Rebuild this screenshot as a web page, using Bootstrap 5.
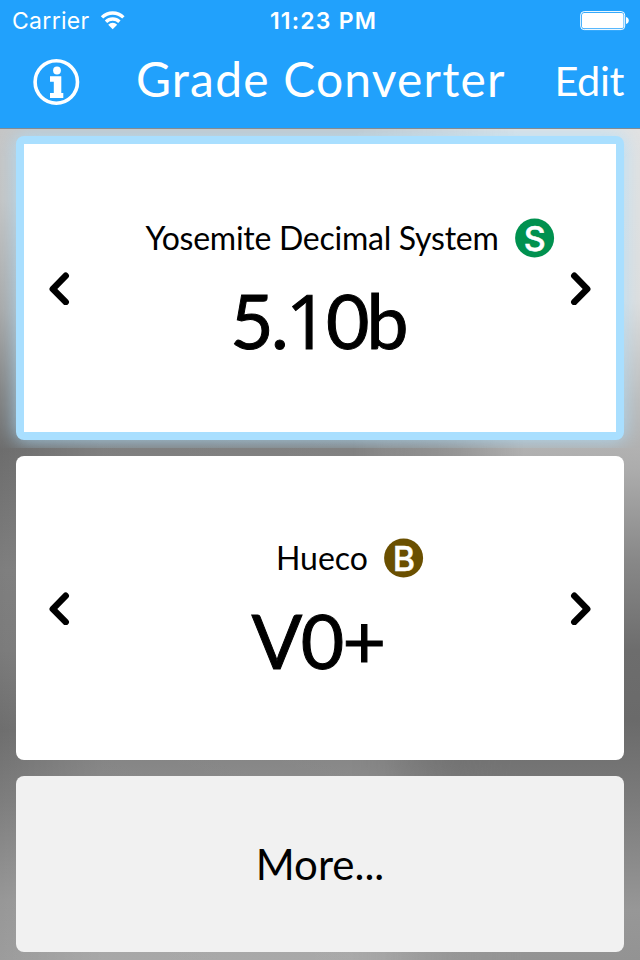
<!DOCTYPE html>
<html lang="en">
<head>
<meta charset="utf-8">
<meta name="viewport" content="width=device-width, initial-scale=1">
<title>Grade Converter</title>
<link href="https://cdn.jsdelivr.net/npm/bootstrap@5.3.0/dist/css/bootstrap.min.css" rel="stylesheet">
<style>
body{font-family:Lato,sans-serif;color:#000;height:960px;overflow:hidden;background:linear-gradient(90deg,transparent,rgba(255,255,255,.12) 16%,rgba(255,255,255,.14) 60%,transparent 72%) 0 440px no-repeat,linear-gradient(#c6c6c6 128px,#c4c4c4 200px,#a9a9a9 310px,#858585 390px,#6d6d6d 450px,#7e7e7e 570px,#7b7b7b 650px,#6e6e6e 730px,#7d7d7d 800px,#979797 900px,#9c9c9c 960px)}
body::before{content:"";position:absolute;inset:0;z-index:-1;background:linear-gradient(#e2e2e2 128px,#dedede 300px,#bdbdbd 400px,#acacac 470px,#888 560px,#6d6d6d 650px,#6a6a6a 720px,#7b7b7b 800px,#979797 910px,#939393 960px);-webkit-mask-image:linear-gradient(90deg,transparent 55%,#000 82%);mask-image:linear-gradient(90deg,transparent 55%,#000 82%)}
.app-header{height:129px;background:#21a1fc;border-bottom:1px solid #838c94;z-index:2}
.status-bar{height:40px;padding:0 10px 0 12px;font-family:Inter,sans-serif;font-size:23px;line-height:42px}
.status-side{flex:1 1 0}
.carrier{letter-spacing:.3px;margin-right:10px}
.clock{letter-spacing:1.2px;padding-left:5px}
.title-bar{height:88px;padding:0 16px 0 32px}
.info-icon{height:84px}
.app-title{font-size:48px;line-height:77px;letter-spacing:1.17px;margin-left:56px}
.edit-link{font-size:41.5px;line-height:81px;letter-spacing:-.4px}
.tiles{padding:7px 16px 0;gap:16px}
.tile{height:304px;border-radius:8px;background:#fff;padding:0 32px}
.tile-active{border:8px solid #a9dfff;padding:0 24px;background-clip:padding-box;box-shadow:0 0 18px 1px rgba(169,223,255,.75);clip-path:inset(-8px -16px)}
.tile-more{height:176px;background:#f1f1f1;font-size:42px}
.scale-name{font-size:32px;line-height:40px;margin:2px 0 22px 4px}
.scale-long{letter-spacing:-.26px}
.scale-kind{left:100%;top:0;margin-left:16px}
.kind-letter{font:500 34px Inter,sans-serif}
.grade{font-size:75px;line-height:80px;margin-left:-4px;letter-spacing:-2.8px;-webkit-text-stroke:1px #000}
.grade-short{letter-spacing:-1.6px}
.plain-one{font-family:"Open Sans",sans-serif}
</style>
</head>
<body>
<header class="app-header position-relative text-white">
  <div class="status-bar d-flex align-items-start">
    <div class="status-side d-flex"><span class="carrier">Carrier</span>
      <svg width="26" height="40" viewBox="0 0 26 40" fill="none" stroke="#fff" stroke-width="3.4"><path d="M2 17.400a15.300 15.300 0 0 1 21.400 0M6 21.700a9.700 9.700 0 0 1 13.400 0"/><path d="M12.700 29.200l-4.500-4.500a6.300 6.300 0 0 1 9 0z" fill="#fff" stroke="none"/></svg></div>
    <span class="clock fw-semibold">11:23 PM</span>
    <div class="status-side d-flex justify-content-end">
      <svg width="50" height="40"><rect x="0.7" y="11.6" width="44" height="18" rx="3.5" fill="none" stroke="#fff"/><rect x="2" y="13" width="41.500" height="15.300" rx="2" fill="#fff"/><path d="M46 17a3.600 3.600 0 0 1 0 7z" fill="#fff"/></svg></div>
  </div>
  <div class="title-bar d-flex align-items-start">
    <svg class="info-icon" width="48" viewBox="0 0 48 84"><circle cx="24.3" cy="42" r="21.2" fill="none" stroke="#fff" stroke-width="3.600"/><circle cx="25" cy="30.500" r="3.900" fill="#fff"/><path d="M18 36.300h11.300v16.700h2v5h-13.300v-5h3.800v-11.200h-3.800z" fill="#fff"/></svg>
    <span class="app-title text-nowrap">Grade Converter</span>
    <span class="edit-link ms-auto">Edit</span>
  </div>
</header>
<main class="tiles d-flex flex-column">
  <section class="tile tile-active d-flex align-items-center justify-content-between">
    <svg width="24" height="34" fill="none" stroke="#000" stroke-width="6.500" stroke-linecap="round" stroke-linejoin="round"><path d="M17.700 4.800L4.800 18l12.900 13"/></svg>
    <div class="text-center">
      <div class="scale-name"><span class="scale-long position-relative d-inline-block">Yosemite Decimal System<svg class="scale-kind position-absolute" width="40" height="40"><circle cx="19.600" cy="20" r="19.500" fill="#00914f"/><text class="kind-letter" x="19.600" y="32.500" text-anchor="middle" fill="#fff" stroke="#fff" stroke-width=".5">S</text></svg></span></div>
      <div class="grade">5.<span class="plain-one">1</span>0b</div>
    </div>
    <svg width="24" height="34" fill="none" stroke="#000" stroke-width="6.500" stroke-linecap="round" stroke-linejoin="round"><path d="M6.300 4.800L19.200 18 6.300 31"/></svg>
  </section>
  <section class="tile d-flex align-items-center justify-content-between">
    <svg width="24" height="34" fill="none" stroke="#000" stroke-width="6.500" stroke-linecap="round" stroke-linejoin="round"><path d="M17.700 4.800L4.800 18l12.900 13"/></svg>
    <div class="text-center">
      <div class="scale-name"><span class="position-relative d-inline-block">Hueco<svg class="scale-kind position-absolute" width="40" height="40"><circle cx="19.600" cy="20" r="19.500" fill="#6a4f00"/><text class="kind-letter" x="20" y="32.500" text-anchor="middle" fill="#fff" stroke="#fff" stroke-width=".5">B</text></svg></span></div>
      <div class="grade grade-short">V0+</div>
    </div>
    <svg width="24" height="34" fill="none" stroke="#000" stroke-width="6.500" stroke-linecap="round" stroke-linejoin="round"><path d="M6.300 4.800L19.200 18 6.300 31"/></svg>
  </section>
  <section class="tile tile-more d-flex align-items-center justify-content-center">More...</section>
</main>
<script src="https://cdn.jsdelivr.net/npm/bootstrap@5.3.0/dist/js/bootstrap.bundle.min.js"></script>
</body>
</html>
